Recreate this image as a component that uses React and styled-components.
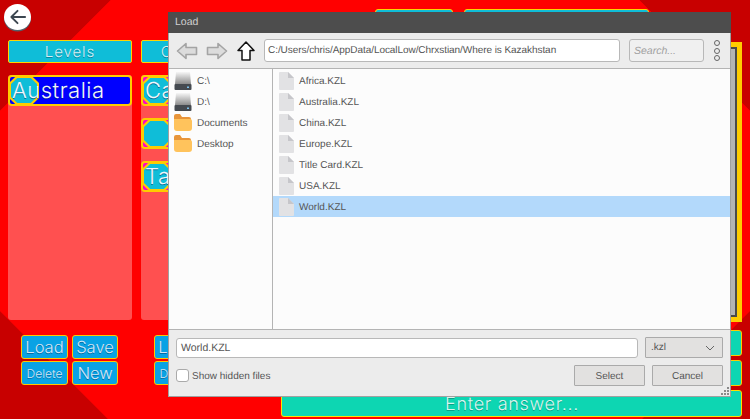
import React from "react";
import styled, { createGlobalStyle } from "styled-components";

const Global = createGlobalStyle`
  html, body { margin: 0; padding: 0; width: 750px; height: 419px; overflow: hidden; background: #f00; }
  * { box-sizing: border-box; }
  body { text-rendering: geometricPrecision; }
`;

const gameFont = `Inter, "Open Sans", "DejaVu Sans", sans-serif`;
const uiFont = `"Liberation Sans", Arial, sans-serif`;

const Page = styled.div`
  position: relative;
  width: 750px;
  height: 419px;
  overflow: hidden;
  display: flex;
  flex-direction: column;
  font-family: ${gameFont};
  background:
    linear-gradient(135deg, #c80000 0, #c80000 78px, transparent 78.6px),
    linear-gradient(225deg, #c80000 0, #c80000 78px, transparent 78.6px),
    linear-gradient(45deg, #c80000 0, #c80000 76px, transparent 76.6px),
    linear-gradient(315deg, #c80000 0, #c80000 76px, transparent 76.6px),
    #ff0000;
`;

const TopRow = styled.div`
  height: 40px;
  display: flex;
  align-items: flex-start;
  padding: 4px 0 0 4px;
  flex: none;
`;

const BackButton = styled.button`
  width: 27px;
  height: 26px;
  padding: 0;
  border: none;
  border-radius: 50%;
  background: #fff;
  box-shadow: 0 1.5px 0 #55606a;
  display: flex;
  align-items: center;
  justify-content: center;
`;

const TopTabs = styled.div`
  margin: 5px 0 0 344px;
  display: flex;
  gap: 11px;
`;

const TopTab = styled.div`
  width: ${(p) => p.$w}px;
  height: 24px;
  background: #0fbdd8;
  border: 1.5px solid #ffd400;
  border-radius: 3px;
`;

const Workspace = styled.div`
  display: flex;
  padding-left: 8px;
  flex: 1;
`;

const Column = styled.section`
  width: 124px;
  margin-right: 9px;
  display: flex;
  flex-direction: column;
  flex: none;
`;

const ColumnHeader = styled.div`
  height: 23px;
  background: #0fbdd8;
  border: 1.5px solid #ffd400;
  border-radius: 2px;
  color: #d8eef2;
  font-size: 15px;
  font-weight: 300;
  line-height: 21px;
  letter-spacing: 0.9px;
  text-align: center;
  text-shadow: 0 1px 0 rgba(0, 60, 80, 0.45);
`;

const ListPanel = styled.div`
  margin-top: 12px;
  height: 245px;
  background: #ff5050;
  border-radius: 3px;
  display: flex;
  flex-direction: column;
  gap: 12px;
`;

const LevelItem = styled.div`
  position: relative;
  height: 31px;
  background: ${(p) => (p.$selected ? "#0000ff" : "#ff00cc")};
  border: 2px solid #ffcc00;
  border-radius: 4px;
  color: #f0f6fa;
  font-size: 22px;
  font-weight: 300;
  line-height: 28px;
  padding-left: 2px;
  letter-spacing: 0.5px;
  text-shadow: 0 1px 0 rgba(0, 40, 90, 0.55);
  white-space: nowrap;
`;

const Octagon = styled.span`
  position: absolute;
  left: -1px;
  top: -1px;
  width: 30px;
  height: 29px;
  background: #ffcc00;
  clip-path: polygon(24% 0, 76% 0, 100% 24%, 100% 76%, 76% 100%, 24% 100%, 0 76%, 0 24%);

  &::after {
    content: "";
    position: absolute;
    inset: 2px;
    background: #0fbdd8;
    clip-path: polygon(24% 0, 76% 0, 100% 24%, 100% 76%, 76% 100%, 24% 100%, 0 76%, 0 24%);
  }
`;

const ItemLabel = styled.span`
  position: relative;
`;

const ButtonGrid = styled.div`
  margin: 15px 0 0 13px;
  display: grid;
  grid-template-columns: 47px 46px;
  grid-auto-rows: 24px;
  gap: 2px 4px;
`;

const SmallButton = styled.div`
  background: #09a2e4;
  border: 1.5px solid #ffc800;
  border-radius: 3px;
  color: #d6e6f2;
  font-size: ${(p) => (p.$small ? 12 : 16.5)}px;
  font-weight: 300;
  line-height: 23px;
  text-align: center;
  white-space: nowrap;
  overflow: hidden;
  text-shadow: 0 1px 0 rgba(0, 40, 90, 0.45);
`;

const StagePanel = styled.div`
  display: flex;
  flex-direction: column;
  width: 461px;
  margin-left: 7px;
  flex: none;
`;

const Stage = styled.div`
  margin-top: 2px;
  height: 280px;
  border: 5px solid #ffcc00;
  background: #4a4a4a;
  padding: 2px;
`;

const StageInner = styled.div`
  height: 100%;
  background: #b4b4b4;
`;

const AnswerRow = styled.div`
  margin-top: ${(p) => p.$top}px;
  height: 26px;
  background: #0dd6b2;
  border: 1.5px solid #ffcc00;
  border-radius: 3px;
`;

const EnterAnswer = styled.div`
  margin-top: 4px;
  height: 27px;
  background: #0dd6b2;
  border: 1.5px solid #ffe000;
  border-radius: 3px;
  color: #d8f4ee;
  font-size: 18px;
  font-weight: 300;
  line-height: 28px;
  letter-spacing: 0.7px;
  padding-left: 163px;
  white-space: nowrap;
  text-shadow: 0 1px 0 rgba(0, 70, 60, 0.4);
`;

const Dialog = styled.div`
  position: absolute;
  left: 168px;
  top: 12px;
  width: 563px;
  height: 385px;
  background: #ececec;
  border: 1px solid #a0a0a0;
  border-top: none;
  display: flex;
  flex-direction: column;
  font-family: ${uiFont};
  color: #555;
  font-size: 10px;
`;

const TitleBar = styled.div`
  height: 21px;
  background: #4d4d4d;
  color: #d0d0d0;
  font-size: 10.5px;
  line-height: 21px;
  padding-left: 7px;
  margin: 0 -1px;
  flex: none;
`;

const Toolbar = styled.div`
  height: 36px;
  display: flex;
  align-items: center;
  padding-left: 7px;
  border-bottom: 1px solid #b4b4b4;
  flex: none;
`;

const ToolIcon = styled.svg`
  display: block;
  flex: none;
  margin-right: ${(p) => p.$mr || 0}px;
`;

const PathField = styled.div`
  width: 356px;
  height: 23px;
  margin-left: 9px;
  background: #fff;
  border: 1px solid #b8b8b8;
  border-radius: 3px;
  line-height: 22px;
  padding-left: 3px;
  letter-spacing: -0.06px;
  white-space: nowrap;
`;

const SearchField = styled.div`
  width: 75px;
  height: 23px;
  margin-left: 9px;
  background: #f0f0f0;
  border: 1px solid #b8b8b8;
  border-radius: 3px;
  line-height: 22px;
  padding-left: 4px;
  font-size: 10.5px;
  font-style: italic;
  color: #a0a0a0;
`;

const MoreDots = styled.div`
  margin-left: 10px;
  display: flex;
  flex-direction: column;
  gap: 1.5px;
`;

const Dot = styled.span`
  width: 6px;
  height: 6px;
  border: 1.3px solid #666;
  border-radius: 50%;
`;

const Body = styled.div`
  height: 261px;
  display: flex;
  background: #fcfcfc;
  border-bottom: 1px solid #b4b4b4;
  flex: none;
`;

const Sidebar = styled.div`
  width: 104px;
  border-right: 1px solid #b4b4b4;
  padding: 1px 0 0 5px;
  flex: none;
`;

const FileList = styled.div`
  flex: 1;
  padding-top: 1px;
`;

const Row = styled.div`
  height: 21px;
  display: flex;
  align-items: center;
  gap: ${(p) => p.$gap}px;
  padding-left: ${(p) => p.$pad}px;
  background: ${(p) => (p.$selected ? "#b3d9fb" : "transparent")};
  white-space: nowrap;
`;

const RowLabel = styled.span`
  margin-top: 2px;
`;

const Footer = styled.div`
  flex: 1;
  position: relative;
  padding: 8px 7px 0;
  display: grid;
  grid-template-columns: 462px 1fr;
  column-gap: 7px;
  align-content: start;
`;

const NameField = styled.div`
  height: 20px;
  background: #fff;
  border: 1px solid #b8b8b8;
  border-radius: 3px;
  line-height: 18px;
  padding-left: 4px;
  font-size: 10.5px;
`;

const ExtSelect = styled.div`
  height: 21px;
  margin-top: -1px;
  width: 78px;
  background: #e2e1e0;
  border: 1px solid #aaa;
  border-radius: 1px;
  padding: 0 7px 0 5px;
  display: flex;
  align-items: center;
  justify-content: space-between;
`;

const HiddenLabel = styled.label`
  display: flex;
  align-items: center;
  gap: 3px;
  margin-top: 7px;
  height: 21px;
`;

const CheckBox = styled.span`
  width: 13px;
  height: 13px;
  background: #fff;
  border: 1px solid #aaa;
  border-radius: 3px;
`;

const HiddenText = styled.span`
  margin-top: 2px;
`;

const FooterButtons = styled.div`
  grid-column: 1 / 3;
  margin-top: -21px;
  display: flex;
  justify-content: flex-end;
  gap: 7px;
`;

const DialogButton = styled.div`
  width: 71px;
  height: 21px;
  background: #e2e1e0;
  border: 1px solid #aaa;
  border-radius: 1px;
  line-height: 21px;
  text-align: center;
`;

const Grip = styled.svg`
  position: absolute;
  right: 0;
  bottom: 0;
`;

const ArrowIcon = ({ flip, mr }) => (
  <ToolIcon width="22" height="18" viewBox="0 0 22 18" $mr={mr} style={flip ? { transform: "scaleX(-1)" } : undefined}>
    <path d="M1.5 9 L10 1.5 V5.5 H20.5 V12.5 H10 V16.5 Z" fill="#dcdcdc" stroke="#a4a4a4" strokeWidth="1.6" strokeLinejoin="round" />
  </ToolIcon>
);

const UpIcon = () => (
  <ToolIcon width="18" height="20" viewBox="0 0 18 20">
    <path d="M9 1 L17 9.5 H13 V19 H5 V9.5 H1 Z" fill="#fff" stroke="#111" strokeWidth="1.5" strokeLinejoin="round" />
  </ToolIcon>
);

const DriveIcon = () => (
  <svg width="18" height="18" viewBox="0 0 18 18">
    <defs>
      <linearGradient id="drive" x1="0" y1="0" x2="0" y2="1">
        <stop offset="0" stopColor="#f6f6f6" />
        <stop offset="1" stopColor="#8c8c8c" />
      </linearGradient>
    </defs>
    <path d="M2 0 H16 L17 12 H1 Z" fill="url(#drive)" />
    <rect x="0.5" y="12" width="17" height="6" rx="1" fill="#454a50" />
    <rect x="13" y="14.5" width="2" height="1.5" fill="#7fc2ec" />
  </svg>
);

const FolderIcon = () => (
  <svg width="18" height="17" viewBox="0 0 18 17">
    <path d="M0 2 Q0 0 2 0 H6 L8 3 H15 Q17 3 17 5 V6 H0 Z" fill="#e8953a" />
    <path d="M0 5 H16 Q18 5 18 7 V14 Q18 17 15 17 H3 Q0 17 0 14 Z" fill="#ffc35c" />
  </svg>
);

const FileIcon = () => (
  <svg width="15" height="18" viewBox="0 0 15 18">
    <path d="M1 0 H9 L15 6 V17 Q15 18 14 18 H1 Q0 18 0 17 V1 Q0 0 1 0 Z" fill="#e2e2e4" />
    <path d="M9 0 L15 6 H9 Z" fill="#c6c6ca" />
  </svg>
);

const places = [
  ["C:\\", DriveIcon],
  ["D:\\", DriveIcon],
  ["Documents", FolderIcon],
  ["Desktop", FolderIcon],
];

const files = ["Africa.KZL", "Australia.KZL", "China.KZL", "Europe.KZL", "Title Card.KZL", "USA.KZL", "World.KZL"];

const ButtonSet = () => (
  <ButtonGrid>
    <SmallButton>Load</SmallButton>
    <SmallButton>Save</SmallButton>
    <SmallButton $small>Delete</SmallButton>
    <SmallButton>New</SmallButton>
  </ButtonGrid>
);

export default function App() {
  return (
    <Page>
      <Global />
      <TopRow>
        <BackButton aria-label="Back">
          <svg width="18" height="18" viewBox="0 0 19 19" fill="none" stroke="#3c4650" strokeWidth="2" strokeLinecap="round" strokeLinejoin="round">
            <path d="M17 9.5 H2.5 M9 3 L2.5 9.5 L9 16" />
          </svg>
        </BackButton>
        <TopTabs>
          <TopTab $w={78} />
          <TopTab $w={185} />
        </TopTabs>
      </TopRow>
      <Workspace>
        <Column>
          <ColumnHeader>Levels</ColumnHeader>
          <ListPanel>
            <LevelItem $selected>
              <Octagon />
              <ItemLabel>Australia</ItemLabel>
            </LevelItem>
          </ListPanel>
          <ButtonSet />
        </Column>
        <Column>
          <ColumnHeader>Categories</ColumnHeader>
          <ListPanel>
            <LevelItem>
              <Octagon />
              <ItemLabel>Capitals</ItemLabel>
            </LevelItem>
            <LevelItem>
              <Octagon />
            </LevelItem>
            <LevelItem>
              <Octagon />
              <ItemLabel>Tasmania</ItemLabel>
            </LevelItem>
          </ListPanel>
          <ButtonSet />
        </Column>
        <StagePanel>
          <Stage>
            <StageInner />
          </Stage>
          <AnswerRow $top={8} />
          <AnswerRow $top={4} />
          <EnterAnswer>Enter answer...</EnterAnswer>
        </StagePanel>
      </Workspace>

      <Dialog>
        <TitleBar>Load</TitleBar>
        <Toolbar>
          <ArrowIcon mr={8} />
          <ArrowIcon flip mr={9} />
          <UpIcon />
          <PathField>C:/Users/chris/AppData/LocalLow/Chrxstian/Where is Kazakhstan</PathField>
          <SearchField>Search...</SearchField>
          <MoreDots>
            <Dot />
            <Dot />
            <Dot />
          </MoreDots>
        </Toolbar>
        <Body>
          <Sidebar>
            {places.map(([name, Icon]) => (
              <Row key={name} $gap={5} $pad={0}>
                <Icon />
                <RowLabel>{name}</RowLabel>
              </Row>
            ))}
          </Sidebar>
          <FileList>
            {files.map((f) => (
              <Row key={f} $gap={5} $pad={6} $selected={f === "World.KZL"}>
                <FileIcon />
                <RowLabel>{f}</RowLabel>
              </Row>
            ))}
          </FileList>
        </Body>
        <Footer>
          <NameField>World.KZL</NameField>
          <ExtSelect>
            .kzl
            <svg width="10" height="6" viewBox="0 0 10 6" fill="none" stroke="#666" strokeWidth="1">
              <path d="M1 1 L5 5 L9 1" />
            </svg>
          </ExtSelect>
          <HiddenLabel>
            <CheckBox />
            <HiddenText>Show hidden files</HiddenText>
          </HiddenLabel>
          <FooterButtons>
            <DialogButton>Select</DialogButton>
            <DialogButton>Cancel</DialogButton>
          </FooterButtons>
          <Grip width="10" height="10" viewBox="0 0 10 10" fill="#8a8a8a">
            <rect x="7" y="1" width="2" height="2" />
            <rect x="4" y="4" width="2" height="2" />
            <rect x="7" y="4" width="2" height="2" />
            <rect x="1" y="7" width="2" height="2" />
            <rect x="4" y="7" width="2" height="2" />
            <rect x="7" y="7" width="2" height="2" />
          </Grip>
        </Footer>
      </Dialog>
    </Page>
  );
}
